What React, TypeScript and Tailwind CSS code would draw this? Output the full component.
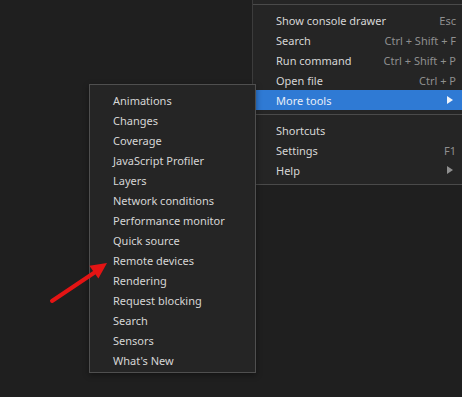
import React from "react";

const mainTop = [
  { label: "Show console drawer", sc: "Esc" },
  { label: "Search", sc: "Ctrl + Shift + F" },
  { label: "Run command", sc: "Ctrl + Shift + P" },
  { label: "Open file", sc: "Ctrl + P" },
];

const subItems = [
  "Animations",
  "Changes",
  "Coverage",
  "JavaScript Profiler",
  "Layers",
  "Network conditions",
  "Performance monitor",
  "Quick source",
  "Remote devices",
  "Rendering",
  "Request blocking",
  "Search",
  "Sensors",
  "What's New",
];

function Tri({ className }: { className?: string }) {
  return (
    <svg width="6" height="8" viewBox="0 0 6 8" className={className}>
      <path d="M0 0 L6 4 L0 8 Z" fill="currentColor" />
    </svg>
  );
}

const row = "flex h-[20px] items-center justify-between pt-[1px] leading-none";

export default function App() {
  return (
    <div
      className="relative w-[462px] h-[397px] overflow-hidden bg-[#1f1f1f] text-[11px] text-[#d6d6d6]"
      style={{ fontFamily: '"Noto Sans", "Open Sans", sans-serif' }}
    >
      {/* main menu */}
      <div className="absolute left-[252px] top-0 right-0 border-l border-[#3c3c3c] bg-[#252525]">
        <div className="h-[4px]" />
        <div className="h-px bg-[#4a4a4a]" />
        <div className="pt-[5px]">
          {mainTop.map((it) => (
            <div key={it.label} className={`${row} pl-[23px] pr-[6px]`}>
              <span>{it.label}</span>
              <span className="text-[#8f8f8f]">{it.sc}</span>
            </div>
          ))}
          <div className={`${row} ml-[2px] pl-[21px] pr-[9px] bg-[#2f7ad4] text-[#e8eef8]`}>
            <span>More tools</span>
            <Tri className="text-[#eef3fa] -mt-[1px]" />
          </div>
          <div className="pt-[4px] pb-[5px]">
            <div className="h-px bg-[#4a4a4a]" />
          </div>
          <div className={`${row} pl-[23px] pr-[6px]`}>
            <span>Shortcuts</span>
          </div>
          <div className={`${row} pl-[23px] pr-[6px]`}>
            <span>Settings</span>
            <span className="text-[#8f8f8f]">F1</span>
          </div>
          <div className={`${row} pl-[23px] pr-[9px]`}>
            <span>Help</span>
            <Tri className="text-[#8f8f8f] -mt-[1px]" />
          </div>
          <div className="pt-[4px]">
            <div className="h-px bg-[#4a4a4a]" />
          </div>
        </div>
      </div>

      {/* submenu */}
      <div className="absolute left-[89px] top-[84px] w-[167px] h-[289px] border border-[#4f4f4f] bg-[#252525] pt-[5px] shadow-[0_2px_6px_rgba(0,0,0,0.4)]">
        {subItems.map((s, i) => (
          <div key={i} className="flex h-[20px] items-center pt-[1px] pl-[23px] leading-none">
            {s}
          </div>
        ))}
      </div>

      {/* red arrow */}
      <svg className="absolute left-0 top-0 pointer-events-none" width="462" height="397">
        <line x1="52" y1="301" x2="96" y2="271.5" stroke="#e41414" strokeWidth="4" strokeLinecap="round" />
        <polygon points="107,263 98.4,278.6 89.4,265.8" fill="#e41414" />
      </svg>
    </div>
  );
}
